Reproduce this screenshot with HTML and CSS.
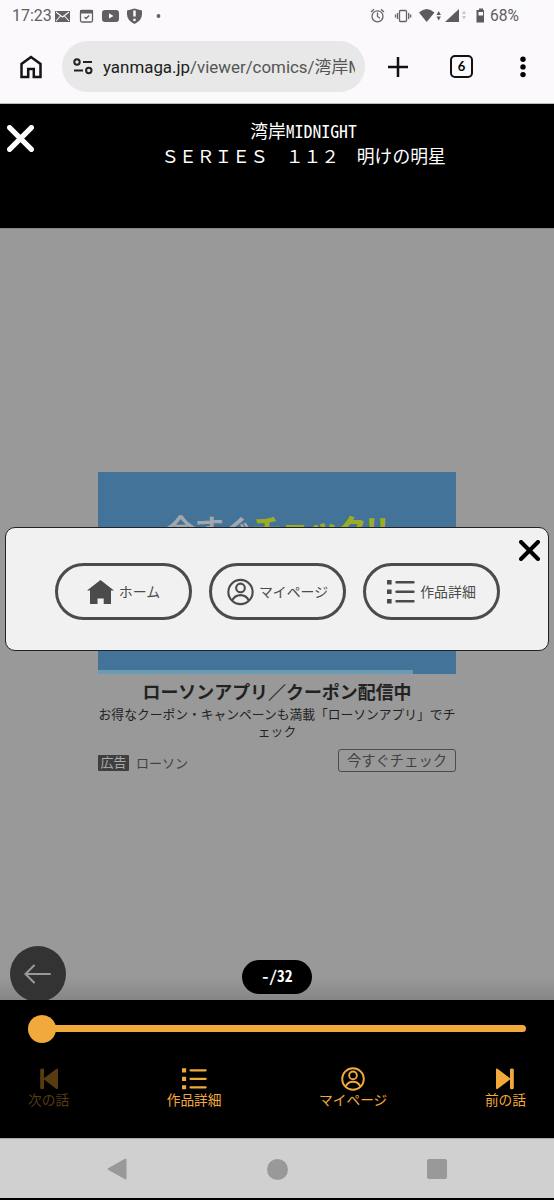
FILE: index.html
```html
<!DOCTYPE html>
<html lang="ja">
<head>
<meta charset="utf-8">
<title>湾岸MIDNIGHT</title>
<link rel="stylesheet" href="styles.css">
</head>
<body>
<svg class="defs" width="0" height="0">
  <symbol id="user" viewBox="0 0 28 28"><g fill="none" stroke="currentColor" stroke-width="2.2"><circle cx="14" cy="14" r="12.6"/><circle cx="14" cy="9.8" r="4.5"/><path d="M5.3 22.8Q8 17.2 14 17.2T22.7 22.8"/></g></symbol>
  <symbol id="list" viewBox="0 0 28 24"><path fill="currentColor" d="M0 0h4.6v4.6H0zM0 9.5h4.6v4.6H0zM0 19h4.6v4.6H0z"/><path stroke="currentColor" stroke-width="2.4" stroke-linecap="round" d="M9.5 2.3h17M9.5 11.8h17M9.5 21.3h17"/></symbol>
  <symbol id="cross" viewBox="0 0 26 26"><path stroke="currentColor" stroke-width="5" stroke-linecap="round" d="M2.5 2.5l21 21M23.5 2.5l-21 21"/></symbol>
  <symbol id="skip" viewBox="0 0 18 22"><path fill="currentColor" d="M0 1.5Q0 0 1.5.7L14 10.3V1.5Q14 .5 15.8.5T17.8 1.5V20Q17.8 21.3 15.8 21.3T14 20V11.5L1.5 21Q0 21.5 0 20z"/></symbol>
</svg>
<div class="phone">
  <header class="status">
    <span class="clock">17:23</span>
    <svg class="status-left" width="108" height="16" viewBox="55 8 108 16">
      <path fill="#626062" d="M55 11h15v11H55z"/><path d="M56 12l6.5 5 6.5-5M56 21l4.5-5M69 21l-4.5-5" fill="none" stroke="#fbf9fb" stroke-width="1.1"/>
      <rect x="80.5" y="10.5" width="12" height="11.5" rx="1.5" fill="none" stroke="#626062" stroke-width="1.3"/><path d="M80 10h13v3.5H80z" fill="#626062"/><path d="M84.5 17l1.6 1.6 3-3.2" fill="none" stroke="#626062" stroke-width="1.4"/>
      <rect x="102" y="10" width="17" height="12" rx="3" fill="#626062"/><path d="M109 13.3v5.2l4.5-2.6z" fill="#fbf9fb"/>
      <path d="M127 10.5q4-1 7.500-2 3.500 1 7.500 2V14q0 6.500-7.500 10Q127 20.500 127 14z" fill="#626062"/><path d="M134.500 10.500v6M134.500 18.700v2.300" stroke="#fff" stroke-width="2.400"/>
      <circle cx="158.500" cy="16" r="1.900" fill="#626062"/>
    </svg>
    <svg class="status-right" width="114" height="16" viewBox="370 8 114 16">
      <g fill="none" stroke="#656365" stroke-width="1.300"><circle cx="377.500" cy="16.300" r="5.500"/><path d="M377.500 12.500v4l2.500 1.800M371 12l3-2.800M384 12l-3-2.800"/><rect x="399.500" y="10.500" width="7" height="11" rx="1"/><path d="M397.500 13v6M395.500 14.500v3M408.700 13v6M410.600 14.500v3"/></g>
      <path d="M419 12.500q7.800-7 15.500 0L426.700 22z" fill="#5d5b5d"/><path d="M436.500 15l2.200-4 2.200 4zM436.500 16.500h4.400l-2.200 4z" fill="#5d5b5d"/>
      <path d="M445 22L459 9v13z" fill="#5d5b5d"/><path d="M462 14l2-3.500 2 3.500zM462 16h4l-2 3.500z" fill="#c9c7c9"/>
      <path d="M479 8.500h4V10h2v12.500h-8.500V10h2.500z" fill="#5d5b5d"/><path d="M478.500 12h4.500v3.500h-4.500z" fill="#fbf9fb"/>
    </svg>
    <span class="battery">68%</span>
  </header>
  <nav class="browser">
    <svg class="home" width="22" height="24" viewBox="0 0 22 24"><path d="M1.500 22V9L11 2l9.500 7v13h-6.700v-8H8.200v8z" fill="none" stroke="#151515" stroke-width="2.500"/></svg>
    <div class="url">
      <svg width="20" height="17" viewBox="0 0 20 17"><g fill="none" stroke="#222" stroke-width="2"><circle cx="4" cy="4" r="2.700"/><circle cx="15.800" cy="12.500" r="2.700"/><path d="M10 4h9M1 12.500h9"/></g></svg>
      <span class="address">yanmaga.jp<span class="path">/viewer/comics/湾岸M</span></span>
    </div>
    <svg class="plus" width="20" height="20" viewBox="0 0 20 20"><path d="M10 0v20M0 10h20" stroke="#111" stroke-width="2.500"/></svg>
    <span class="tabs">6</span>
    <svg class="more" width="6" height="22" viewBox="0 0 6 22"><circle cx="3" cy="3.200" r="2.700"/><circle cx="3" cy="10.900" r="2.700"/><circle cx="3" cy="18.600" r="2.700"/></svg>
  </nav>
  <section class="title">
    <svg class="close" width="27" height="27"><use href="#cross"/></svg>
    <h1><span class="half">湾岸MIDNIGHT</span><br>ＳＥＲＩＥＳ　１１２　明けの明星</h1>
  </section>
  <main class="stage">
    <article class="ad">
      <div class="banner"><span class="banner-text">今すぐ<b>チェック!!</b></span><i class="strip"></i></div>
      <h2>ローソンアプリ／クーポン配信中</h2>
      <p>お得なクーポン・キャンペーンも満載「ローソンアプリ」でチェック</p>
      <div class="ad-foot"><span class="tag">広告</span><span class="brand">ローソン</span><span class="cta">今すぐチェック</span></div>
    </article>
    <div class="back"><svg width="28" height="20" viewBox="0 0 28 20"><path d="M26 10H2M10 1.500L1.500 10l8.500 8.500" fill="none" stroke="#999" stroke-width="2.100" stroke-linecap="round"/></svg></div>
    <div class="count half">-/32</div>
    <div class="dialog">
      <div class="pill"><svg width="27" height="24" viewBox="0 0 27 24"><path fill="currentColor" d="M13.500 0L27 10.500h-3V24h-7.300v-5.500h-6.200V24H3V10.500H0z"/></svg><span>ホーム</span></div>
      <div class="pill"><svg width="27" height="28"><use href="#user"/></svg><span>マイページ</span></div>
      <div class="pill"><svg width="28" height="24"><use href="#list"/></svg><span>作品詳細</span></div>
      <svg class="dialog-close" width="21" height="21"><use href="#cross"/></svg>
    </div>
  </main>
  <footer class="controls">
    <div class="slider"><i class="knob"></i></div>
    <div class="actions">
      <div class="action dim"><svg class="flip" width="18" height="22"><use href="#skip"/></svg>次の話</div>
      <div class="action"><svg width="25" height="22"><use href="#list"/></svg>作品詳細</div>
      <div class="action"><svg width="24" height="24"><use href="#user"/></svg>マイページ</div>
      <div class="action"><svg width="18" height="22"><use href="#skip"/></svg>前の話</div>
    </div>
  </footer>
  <div class="system">
    <svg width="20" height="22" viewBox="0 0 20 22"><path d="M1.500 11L18.500 1.500v19z" fill="#999" stroke="#999" stroke-width="2" stroke-linejoin="round"/></svg>
    <i class="circle"></i><i class="square"></i>
  </div>
</div>
</body>
</html>
```
FILE: styles.css
```css
* { box-sizing: border-box; }
body { margin: 0; background: #000; font-family: "Noto Sans CJK JP", sans-serif; }
svg { display: block; flex: none; }
.defs { position: absolute; }
.phone { width: 554px; height: 1200px; display: flex; flex-direction: column; overflow: hidden; background: #000; }
.half { font-feature-settings: "hwid"; }

.status { height: 32px; flex: none; display: flex; align-items: center; padding: 0 35px 0 12px; background: #fbf9fb; color: #605e60; font: 16px/32px Roboto, sans-serif; }
.clock { width: 43px; }
.status-right { margin-left: auto; }
.battery { width: 29px; margin-left: 6px; font-size: 15.600px; }

.browser { height: 72px; flex: none; display: flex; align-items: center; padding: 0 28px 2px 20px; background: #fbf9fb; border-bottom: 1px solid #b8bbb8; }
.url { width: 303px; height: 51px; margin-left: 20px; border-radius: 26px; background: #e7e8e7; display: flex; align-items: center; gap: 10px; padding: 0 10px 0 11px; color: #202020; }
.address { width: 252px; overflow: hidden; white-space: nowrap; font: 16.900px/28px Roboto, "Noto Sans CJK JP", sans-serif; }
.path { color: #555; }
.plus { margin-left: 23px; }
.tabs { width: 23px; height: 23px; margin-left: 42px; border: 2.500px solid #111; border-radius: 5px; text-align: center; font: bold 13px/19px Lato, sans-serif; }
.more { margin-left: auto; }

.title { height: 124px; flex: none; display: flex; background: #000; color: #fff; }
.close { margin: 21px 0 0 7px; }
.title h1 { flex: 1; margin: 14px 0 0 19px; text-align: center; font-size: 17.800px; line-height: 25px; font-weight: 400; }

.stage { position: relative; height: 772px; flex: none; display: flex; flex-direction: column; align-items: center; background: linear-gradient(#999 0, #999 748px, #858585 772px); border-top: 1px solid #888; }
.ad { width: 358px; margin-top: 243px; color: #222; text-align: center; }
.banner { height: 202px; display: flex; flex-direction: column; justify-content: space-between; align-items: center; background: #437399; }
.banner-text { margin-top: 34px; color: #a1a8ad; font-size: 29px; line-height: 44px; font-weight: 700; letter-spacing: -0.500px; white-space: nowrap; }
.banner-text b { color: #9cac23; }
.strip { width: 100%; height: 4px; background: linear-gradient(90deg, #6b9bb4 88%, #437399 88%); }
.ad h2 { margin: 4px 0 0; font-size: 17.950px; line-height: 26px; font-weight: 700; white-space: nowrap; }
.ad p { margin: 1px 0 0; font-size: 12.780px; line-height: 17px; }
.ad-foot { display: flex; align-items: center; margin-top: 10px; color: #424242; font-size: 13px; line-height: 17px; }
.tag { width: 31px; height: 16px; margin-top: 5px; border-radius: 1px; background: #3f3f3f; color: #aaa; line-height: 14px; }
.brand { margin: 4px 0 0 7px; }
.cta { width: 118px; height: 23px; margin-left: auto; border: 1px solid #4c4c4c; border-radius: 3px; font-size: 14.300px; line-height: 19px; white-space: nowrap; }

.back { position: absolute; left: 10px; bottom: -2px; width: 56px; height: 56px; border-radius: 50%; display: flex; align-items: center; justify-content: center; background: #333; }
.count { position: absolute; left: 242px; bottom: 6px; width: 70px; height: 34px; border-radius: 17px; background: #000; color: #fff; text-align: center; font-size: 15.500px; line-height: 31px; font-weight: 700; }
.dialog { position: absolute; left: 5px; top: 298px; width: 544px; height: 124px; display: flex; gap: 17px; padding: 35px 0 0 49px; border: 1px solid #222; border-radius: 10px; background: #f1f1f1; }
.pill { width: 137px; height: 57px; border: 3.500px solid #4b4b4b; border-radius: 29px; display: flex; align-items: center; justify-content: center; gap: 5px; color: #4b4b4b; font-size: 13.900px; white-space: nowrap; }
.pill span { padding-bottom: 2px; }
.dialog-close { position: absolute; right: 8px; top: 12px; color: #000; }

.controls { position: relative; height: 138px; flex: none; background: #000; padding: 25px 28px 0; color: #f1a93b; }
.slider { height: 7px; margin-left: 4px; border-radius: 4px; background: #f1a93b; display: flex; align-items: center; }
.knob { width: 28px; height: 28px; margin-left: -4px; flex: none; border-radius: 50%; background: #f1a93b; }
.actions { display: flex; justify-content: space-between; margin-top: 35px; }
.action { display: grid; grid-template-rows: 24px 17px; place-items: center; font-size: 13.700px; line-height: 17px; }
.dim { color: #573b11; }
.flip { transform: scaleX(-1); }

.system { height: 60px; flex: none; display: flex; align-items: center; justify-content: space-between; padding: 1px 107px 0; background: #d0d0d0; border-top: 1px solid #aaa; }
.circle { width: 21px; height: 21px; border-radius: 50%; background: #999; }
.square { width: 20px; height: 20px; border-radius: 2px; background: #999; }
```
